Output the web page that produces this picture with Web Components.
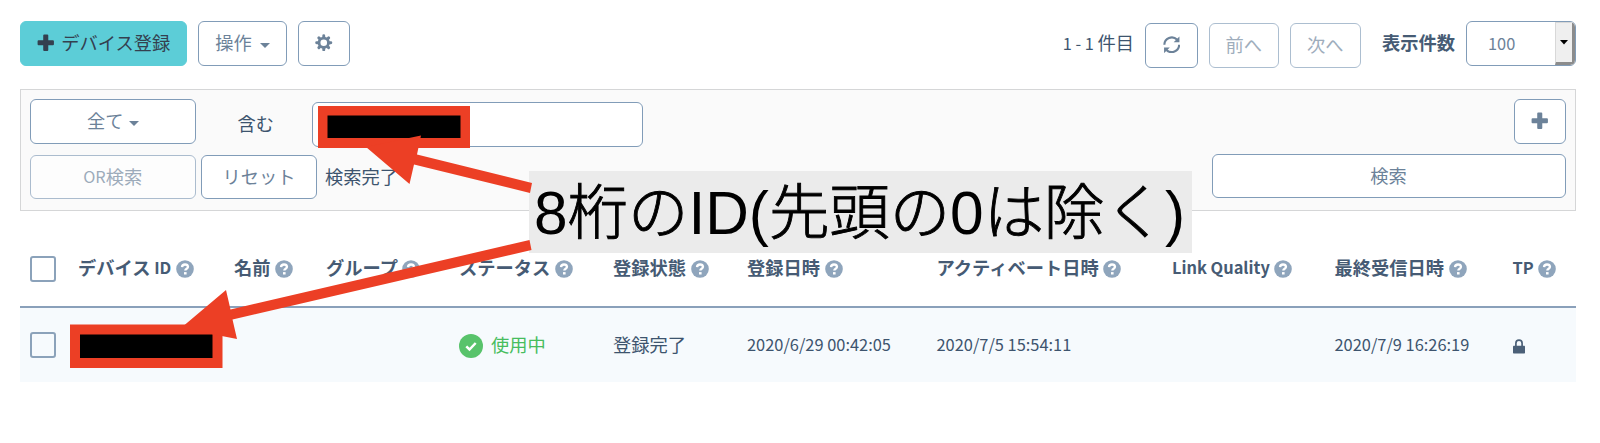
<!DOCTYPE html>
<html lang="ja">
<head>
<meta charset="utf-8">
<title>デバイス一覧</title>
<style>
html, body { margin: 0; background: #fff; }
body { width: 1600px; height: 443px; overflow: hidden; color: #3d546e; font: 18.250px/27px "Noto Sans CJK JP", sans-serif; }
</style>
</head>
<body>
<device-page></device-page>
<script>
const define = (name, html, setup) => customElements.define(name, class extends HTMLElement {
  connectedCallback() {
    if (this.shadowRoot) return;
    const t = document.createElement('template');
    t.innerHTML = html;
    this.attachShadow({ mode: 'open' }).append(t.content.cloneNode(true));
    if (setup) setup(this, this.shadowRoot);
  }
});

const ICONS = {
  plus: ['0 0 18 18', '<path d="M7.400 .6h3.200q1 0 1 1v4.800h4.800q1 0 1 1v3.200q0 1-1 1h-4.800v4.800q0 1-1 1H7.400q-1 0-1-1v-4.800H1.600q-1 0-1-1V7.400q0-1 1-1h4.800V1.600q0-1 1-1z"/>'],
  caret: ['0 0 10 5', '<path d="M0 0h10L5 5z"/>'],
  gear: ['0 0 18 18', '<g stroke="currentColor" stroke-width="3" stroke-linecap="round"><path d="M9 1.700v14.600M1.700 9h14.600M4 4l10 10M14 4L4 14"/></g><circle cx="9" cy="9" r="6.300"/><circle cx="9" cy="9" r="3.400" fill="#fff"/>'],
  refresh: ['0 0 18 18', '<path d="M1.400 9A7.600 7.600 0 0 1 14.400 3.700M16.600 9A7.600 7.600 0 0 1 3.600 14.300" fill="none" stroke="currentColor" stroke-width="2.200"/><path d="M16.900 .4v5.900H11zM1.100 17.600v-5.900H7z"/>'],
  question: ['0 0 18 18', '<circle cx="9" cy="9" r="8.800"/><path d="M6 7.100Q6.200 4.500 9 4.500t3 2.300c0 2-2.700 1.800-2.700 3.800" fill="none" stroke="#fff" stroke-width="2.300"/><path fill="#fff" d="M8 12.100h2.600v2.400H8z"/>'],
  check: ['0 0 24 24', '<circle cx="12" cy="12" r="12"/><path d="M7.300 12.300l3.200 3.200 6.200-6.500" fill="none" stroke="#fff" stroke-width="2.500"/>'],
  lock: ['0 0 12 15', '<path d="M2.900 7V4.200a3.100 3.100 0 0 1 6.200 0V7" fill="none" stroke="currentColor" stroke-width="1.700"/><rect y="6.800" width="12" height="7.700" rx=".7"/>']
};

define('ui-icon', `<style>
:host { display: inline-flex; flex: none; }
.box, svg { display: block; width: 100%; height: 100%; }
svg { fill: currentColor; }
</style><div class="box"></div>`, (el, root) => {
  const [box, body] = ICONS[el.getAttribute('name')];
  el.style.width = el.getAttribute('w') + 'px';
  el.style.height = (el.getAttribute('h') || el.getAttribute('w')) + 'px';
  root.querySelector('.box').innerHTML = `<svg viewBox="${box}" preserveAspectRatio="none">${body}</svg>`;
});

define('ui-button', `<style>
:host { display: block; flex: none; box-sizing: border-box; height: 44.500px; border: 1px solid #819cb8; border-radius: 6px; background: #fff; color: #6c8299; }
:host([kind=primary]) { background: #5ccdd7; border-color: #5ccdd7; color: #34404f; }
:host([disabled]) { opacity: .65; }
div { display: flex; height: 100%; align-items: center; justify-content: center; box-sizing: border-box; padding-bottom: 1px; white-space: nowrap; }
</style><div><slot></slot></div>`);

define('ui-select', `<style>
:host { display: flex; flex: none; box-sizing: border-box; width: 110px; height: 44.500px; border: 1px solid #819cb8; border-radius: 6px; background: #fff; color: #6c8299; overflow: hidden; }
.value { flex: 1; padding: 8px 0 0 21px; font-size: 16.350px; }
.drop { width: 20px; box-sizing: border-box; display: flex; align-items: center; justify-content: center; background: #efefef; color: #000; border-style: solid; border-width: 1px 3px 3px 1px; border-color: #d8d8d8 #8c8c8c #8c8c8c #d8d8d8; }
</style><div class="value"><slot></slot></div><div class="drop"><ui-icon name="caret" w="8" h="4.500"></ui-icon></div>`);

define('ui-toolbar', `<style>
:host { display: flex; justify-content: space-between; align-items: flex-start; height: 68px; }
.left { display: flex; gap: 11px; }
.right { display: flex; align-items: flex-start; }
.lat { font-size: 16.350px; }
.count { padding-top: 8px; margin-right: 11px; white-space: nowrap; }
.pager { display: flex; gap: 11px; padding-top: 2px; margin-right: 21.500px; }
.label { font-weight: 700; padding-top: 8px; margin-right: 11px; color: #465b74; }
</style>
<div class="left">
<ui-button kind="primary" style="width:167px"><ui-icon name="plus" w="17.500"></ui-icon><span style="margin-left:7px">デバイス登録</span></ui-button>
<ui-button style="width:89px"><span>操作</span><ui-icon name="caret" w="10" h="5" style="margin:5px 0 0 8px"></ui-icon></ui-button>
<ui-button style="width:52px"><ui-icon name="gear" w="17.500" style="margin-bottom:1px"></ui-icon></ui-button>
</div>
<div class="right">
<div class="count"><span class="lat">1 - 1 </span>件目</div>
<div class="pager">
<ui-button style="width:52.500px"><ui-icon name="refresh" w="17.500" style="margin-bottom:1px"></ui-icon></ui-button>
<ui-button disabled style="width:70.500px">前へ</ui-button>
<ui-button disabled style="width:70.500px">次へ</ui-button>
</div>
<div class="label">表示件数</div>
<ui-select>100</ui-select>
</div>`);

define('search-panel', `<style>
:host { display: block; box-sizing: border-box; height: 122px; border: 1px solid #d5d6d7; background: #fafafa; padding: 9px 9.500px 9px 9px; }
.row { display: flex; align-items: flex-start; }
.row + .row { margin-top: 7px; }
.word { width: 116.500px; box-sizing: border-box; text-align: center; padding: 11px 0 0 4px; }
.input { box-sizing: border-box; width: 331px; height: 44.500px; margin-top: 3px; border: 1px solid #819cb8; border-radius: 6px; background: #fff; }
.fill { flex: 1; }
.state { padding: 9px 0 0 8px; }
.lat { font-size: 16.350px; }
</style>
<div class="row">
<ui-button style="width:165.500px"><span>全て</span><ui-icon name="caret" w="10" h="5" style="margin:5px 0 0 5px"></ui-icon></ui-button>
<div class="word">含む</div><div class="input"></div><div class="fill"></div>
<ui-button style="width:52px"><ui-icon name="plus" w="17.500"></ui-icon></ui-button>
</div>
<div class="row">
<ui-button disabled style="width:165.500px;margin-top:1px"><span class="lat">OR</span>検索</ui-button>
<ui-button style="width:116px;margin:1px 0 0 5.500px">リセット</ui-button>
<div class="state">検索完了</div><div class="fill"></div>
<ui-button style="width:354px">検索</ui-button>
</div>`);

define('ui-check', `<style>
:host { display: block; box-sizing: border-box; width: 26px; height: 26px; border: 2px solid #8ba2ba; border-radius: 3px; background: transparent; }
</style>`);

define('head-cell', `<style>
:host { display: flex; align-items: center; font-weight: 700; white-space: nowrap; color: #465b74; margin-top: -2px; }
ui-icon { color: #8fa5bc; margin: 3px 0 0 4.500px; }
</style><slot></slot><ui-icon name="question" w="18"></ui-icon>`);

define('device-table', `<style>
:host { display: block; }
.head, .row { display: grid; grid-template-columns: 58px 156px 92px 133px 154px 134px 189.500px 235.500px 162.500px 178px 63px; align-items: center; box-sizing: border-box; white-space: nowrap; }
.head { height: 97px; padding-top: 20px; border-bottom: 2px solid #8aa0ba; }
.row { height: 74px; background: #f6fafd; }
.row > span { margin-top: -2px; }
ui-check { margin-left: 10px; }
.lat { font-size: 16.400px; white-space: pre; }
.ok { color: #47bd5e; display: flex; align-items: center; gap: 8px; }
.ok ui-icon { color: #58c36b; margin-top: 4px; }
.row .lat { padding-top: 1px; }
</style>
<div class="head">
<ui-check></ui-check>
<head-cell>デバイス<span class="lat"> ID</span></head-cell>
<head-cell>名前</head-cell>
<head-cell>グループ</head-cell>
<head-cell>ステータス</head-cell>
<head-cell>登録状態</head-cell>
<head-cell>登録日時</head-cell>
<head-cell>アクティベート日時</head-cell>
<head-cell><span class="lat">Link Quality</span></head-cell>
<head-cell>最終受信日時</head-cell>
<head-cell><span class="lat">TP</span></head-cell>
</div>
<div class="row">
<ui-check></ui-check>
<span></span><span></span><span></span>
<span class="ok"><ui-icon name="check" w="24"></ui-icon>使用中</span>
<span>登録完了</span>
<span class="lat">2020/6/29 00:42:05</span>
<span class="lat">2020/7/5 15:54:11</span>
<span></span>
<span class="lat">2020/7/9 16:26:19</span>
<ui-icon name="lock" w="12" h="15" style="margin-top:3px;color:#4b6078"></ui-icon>
</div>`);

define('markup-layer', `<style>
:host { position: absolute; left: 0; top: 0; width: 1600px; height: 443px; pointer-events: none; }
svg { position: absolute; left: 0; top: 0; }
.note { position: absolute; left: 529px; top: 171px; width: 663px; height: 82px; box-sizing: border-box; padding: 1px 0 0 5px; background: #ebebeb; color: #000; font: 300 60.400px/82px "Liberation Sans", "Noto Sans CJK JP", sans-serif; white-space: nowrap; }
.jp { -webkit-text-stroke: .9px #000; }
</style>
<div class="note">8<span class="jp">桁の</span>ID(<span class="jp">先頭の</span>0<span class="jp">は除く</span>)</div>
<svg width="1600" height="443" viewBox="0 0 1600 443" fill="#ec3f25">
<path d="M318 106h152v42H318zM70 324.500h152.500V368H70z"/>
<path fill="#000" d="M327.500 115.500h133V138h-133zM80 334.500h132.500V358H80z"/>
<path d="M366 147l55-11.500-4 19 115 28.500-2 10-116-28.500-4.500 19.500z"/>
<path d="M181 328l45-38 4.500 19.500L529.500 240l2 10L232.500 319.500l4.500 19.500z"/>
</svg>`);

define('device-page', `<style>
:host { display: block; position: relative; box-sizing: border-box; width: 1600px; height: 443px; padding: 21px 24px 0 20px; }
</style>
<ui-toolbar></ui-toolbar>
<search-panel></search-panel>
<device-table></device-table>
<markup-layer></markup-layer>`);
</script>
</body>
</html>
